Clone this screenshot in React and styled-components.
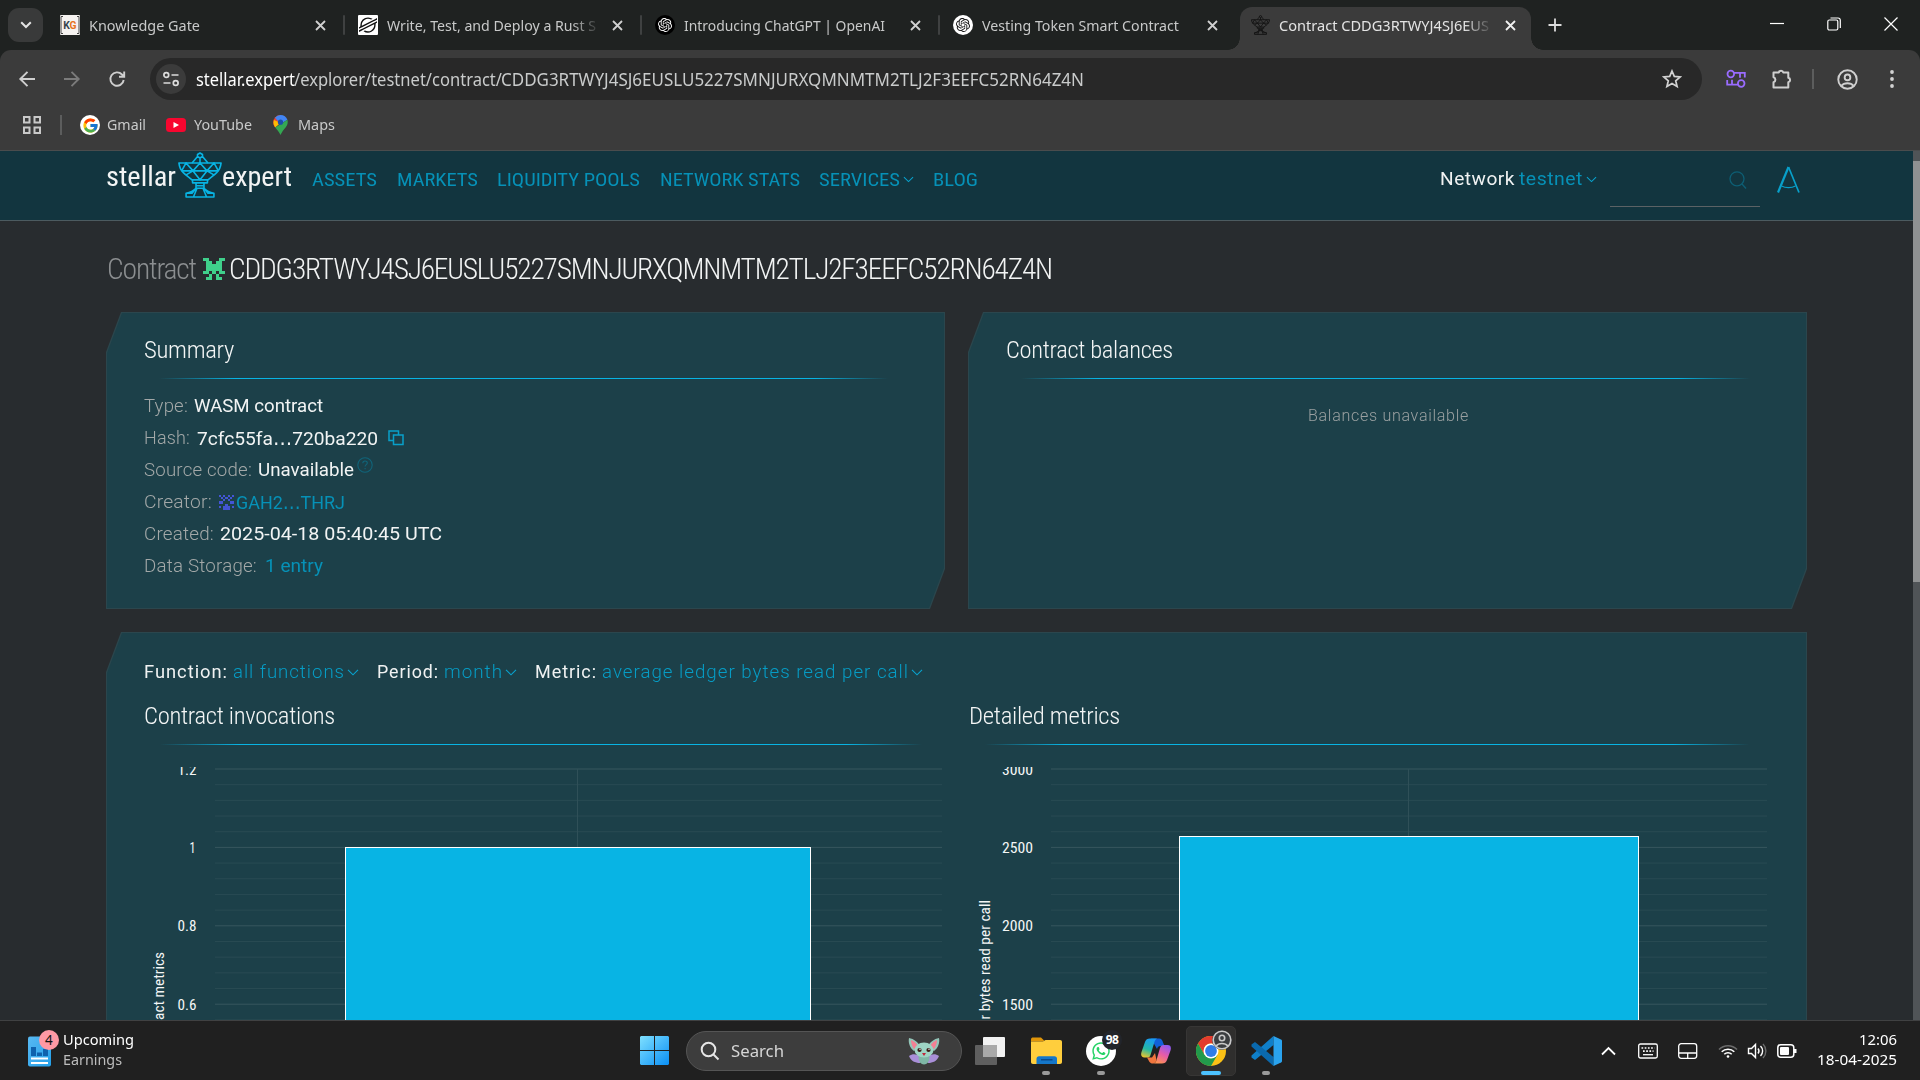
import React, { useLayoutEffect, useRef } from 'react';
import styled, { createGlobalStyle, css } from 'styled-components';
import { FcGoogle } from 'react-icons/fc';
import { FaWhatsapp } from 'react-icons/fa';
import { SiOpenai, SiStellar } from 'react-icons/si';

const ui = `'Segoe UI', 'Noto Sans', 'Open Sans', sans-serif`;
const cond = `'Roboto Condensed', Roboto, sans-serif`;
const body = `Roboto, sans-serif`;

const Global = createGlobalStyle`
  * { box-sizing: border-box; }
  html, body { margin: 0; padding: 0; background: #1f2221; overflow: hidden; }
  svg { display: block; flex: none; }
`;

/* Text that is condensed or stretched horizontally to a given width. */
const FitOuter = styled.span`
  display: block;
  flex: none;
  width: ${p => p.$w}px;
  margin-left: ${p => p.$ml || 0}px;
  white-space: pre;
`;
const FitInner = styled.span`
  display: inline-block;
  position: relative;
  left: -1px;
  transform-origin: 0 50%;
`;
function Fit({ w, ml, className, children }) {
  const ref = useRef(null);
  useLayoutEffect(() => {
    const el = ref.current;
    el.style.transform = 'none';
    const natural = el.getBoundingClientRect().width;
    el.style.transform = `scaleX(${(w + 2) / natural})`;
  }, [w, children]);
  return (
    <FitOuter className={className} $w={w} $ml={ml}>
      <FitInner ref={ref}>{children}</FitInner>
    </FitOuter>
  );
}

const Screen = styled.div`
  width: 1920px;
  height: 1080px;
  display: flex;
  flex-direction: column;
  overflow: hidden;
  font-family: ${ui};
`;

/* ---------- browser tabs ---------- */
const TabStrip = styled.div`
  height: 50px;
  flex: none;
  display: flex;
  background: #1f2221;
`;
const TabSearch = styled.div`
  width: 35px;
  height: 34px;
  margin: 8px 3px 0 8px;
  border-radius: 11px;
  background: #393a3a;
  display: flex;
  align-items: center;
  justify-content: center;
`;
const Tab = styled.div`
  width: ${p => (p.$active ? 291 : 297.5)}px;
  height: ${p => (p.$active ? 43 : 50)}px;
  margin-top: ${p => (p.$active ? 7 : 0)}px;
  margin-left: ${p => (p.$active ? 4 : 0)}px;
  padding-left: ${p => (p.$active ? 10 : 14)}px;
  padding-bottom: ${p => (p.$active ? 7 : 0)}px;
  display: flex;
  align-items: center;
  position: relative;
  border-radius: 12px 12px 0 0;
  background: ${p => (p.$active ? '#3b3b3b' : 'transparent')};
  &::before, &::after {
    content: '';
    display: ${p => (p.$active ? 'block' : 'none')};
    position: absolute;
    bottom: 0;
    width: 12px;
    height: 12px;
  }
  &::before { left: -12px; background: radial-gradient(circle at 0 0, transparent 11.5px, #3b3b3b 12px); }
  &::after { right: -12px; background: radial-gradient(circle at 100% 0, transparent 11.5px, #3b3b3b 12px); }
`;
const Favicon = styled.div`
  width: 20px;
  height: 20px;
  flex: none;
  border-radius: ${p => (p.$round ? '50%' : '1px')};
  background: ${p => p.$bg || 'transparent'};
  color: ${p => p.$fg || '#fff'};
  display: flex;
  align-items: center;
  justify-content: center;
`;
const TabTitleBox = styled.div`
  width: 210px;
  flex: none;
  margin-left: 9px;
  margin-right: 1px;
  margin-top: -1px;
  overflow: hidden;
  ${p => p.$fade && css`mask-image: linear-gradient(90deg, #000 88%, transparent 102%);`}
`;
const TabTitle = styled(Fit)`
  font: 400 15px/24px ${ui};
  color: ${p => (p.$active ? '#e4e4e4' : '#c8c9c9')};
  padding-left: 1px;
`;
const CloseBox = styled.div`
  width: 20px;
  flex: none;
  margin-left: 10px;
  display: flex;
  justify-content: center;
`;
const TabSep = styled.div`
  width: 2px;
  height: 20px;
  margin-left: auto;
  margin-right: -1px;
  border-radius: 1px;
  background: #3f4141;
`;
const NewTab = styled.div`
  margin-left: 17px;
  width: 16px;
  display: flex;
  align-items: center;
`;
const WindowButtons = styled.div`
  margin-left: auto;
  width: 158px;
  display: flex;
  align-items: center;
  gap: 43px;
  padding-left: 8px;
  padding-bottom: 2px;
`;

/* ---------- toolbar and bookmarks ---------- */
const Chrome = styled.div`
  height: 101px;
  flex: none;
  background: #3b3b3b;
  border-bottom: 1px solid #4a4c4d;
  border-radius: 11px 11px 0 0;
`;
const Toolbar = styled.div`
  height: 58px;
  display: flex;
  align-items: center;
  padding-left: 17px;
`;
const NavIcons = styled.div`
  display: flex;
  width: 133px;
  gap: 25px;
`;
const Address = styled.div`
  width: 1552px;
  height: 42px;
  border-radius: 21px;
  background: #282828;
  display: flex;
  align-items: center;
  padding-left: 6px;
`;
const SiteInfo = styled.div`
  width: 30px;
  height: 30px;
  border-radius: 50%;
  background: #3b3b3b;
  display: flex;
  align-items: center;
  justify-content: center;
`;
const Url = styled(Fit)`
  font: 400 18px/26px ${ui};
  color: ${p => (p.$strong ? '#ffffff' : '#c9cbcb')};
`;
const StarBox = styled.div`
  margin-left: auto;
  margin-right: 20px;
`;
const Actions = styled.div`
  display: flex;
  align-items: center;
  flex: 1;
  padding-left: 24px;
`;
const VLine = styled.div`
  width: 2px;
  height: 20px;
  background: #5c5d5d;
  margin-left: ${p => p.$ml || 0}px;
  margin-right: ${p => p.$mr || 0}px;
`;
const Bookmarks = styled.div`
  height: 34px;
  display: flex;
  align-items: center;
  padding-left: 23px;
`;
const BookmarkText = styled(Fit)`
  font: 400 15px/22px ${ui};
  color: #c9caca;
  margin-right: ${p => p.$mr || 0}px;
  margin-top: -2px;
`;
const GoogleDisc = styled.div`
  width: 20px;
  height: 20px;
  border-radius: 50%;
  background: #fff;
  display: flex;
  align-items: center;
  justify-content: center;
`;

/* ---------- web page ---------- */
const Viewport = styled.div`
  flex: 1;
  min-height: 0;
  display: flex;
  background: #282c2f;
`;
const Page = styled.div`
  width: 1913px;
  overflow: hidden;
`;
const Scrollbar = styled.div`
  width: 7px;
  padding-top: 10px;
  background: #505457;
`;
const Thumb = styled.div`
  height: 421px;
  background: #8f9192;
`;
const SiteHeader = styled.header`
  height: 70px;
  background: #12353f;
  border-bottom: 1px solid #4c5b60;
  display: flex;
  align-items: flex-start;
  padding-left: 107px;
`;
const LogoWord = styled(Fit)`
  font: 400 28px/32px ${cond};
  color: #f2f4f4;
  margin-top: 10px;
`;
const Dish = styled.svg`
  margin: 1px 0 0 3px;
`;
const NavItem = styled(Fit)`
  font: 400 19px/24px ${cond};
  color: #0691b7;
  margin-top: 17px;
`;
const NavChevron = styled.svg`
  margin: 25px 0 0 4px;
`;
const NetText = styled(Fit)`
  font: 400 19px/24px ${body};
  letter-spacing: 0.5px;
  color: ${p => (p.$link ? '#0691b7' : '#f0f2f2')};
  margin-top: 16px;
`;
const SearchField = styled.div`
  width: 150px;
  height: 56px;
  margin-left: 13px;
  border-bottom: 1px solid #5b6265;
  display: flex;
  justify-content: flex-end;
  padding: 20px 13px 0 0;
`;
const LogoA = styled.svg`
  margin: 15px 0 0 17px;
`;
const Content = styled.main`
  padding: 28px 0 0 106px;
`;
const TitleRow = styled.div`
  display: flex;
  height: 40px;
  align-items: center;
  padding-left: 2px;
`;
const TitleText = styled(Fit)`
  font: 300 30px/38px ${cond};
  letter-spacing: -1.2px;
  color: ${p => (p.$dim ? '#8b8e90' : '#f2f4f4')};
`;
const Row = styled.div`
  display: flex;
  gap: 23px;
  margin-top: 23px;
`;
const cut = css`
  clip-path: polygon(15px 0, 100% 0, 100% calc(100% - 40px), calc(100% - 15px) 100%, 0 100%, 0 40px);
`;
const CardEdge = styled.section`
  width: ${p => p.$w}px;
  height: ${p => p.$h}px;
  flex: none;
  padding: 1px;
  background: #2b464d;
  margin-top: ${p => p.$mt || 0}px;
  ${cut}
`;
const CardFace = styled.div`
  height: 100%;
  background: #1c4049;
  padding: ${p => p.$pad || '20px 37px 0'};
  ${cut}
`;
const Heading = styled(Fit)`
  font: 300 24px/34px ${cond};
  letter-spacing: -0.3px;
  color: #f4f6f6;
`;
const Rule = styled.div`
  height: 1px;
  margin: ${p => p.$m};
  background: linear-gradient(90deg, transparent 2%, #08b4e4 12%, #08b4e4 88%, transparent 97.5%);
`;
const Field = styled.div`
  height: 32px;
  display: flex;
  align-items: center;
`;
const Label = styled(Fit)`
  font: 300 19px/32px ${body};
  letter-spacing: 0.2px;
  color: #a3a8a8;
`;
const Value = styled(Fit)`
  font: 400 19px/32px ${body};
  color: ${p => (p.$link ? '#0691b7' : '#f2f4f4')};
`;
const Dots = styled.span`
  font-family: 'DejaVu Sans', sans-serif;
`;
const Inline = styled.div`
  margin-left: ${p => p.$ml || 0}px;
  margin-top: ${p => p.$mt || 0}px;
`;
const EmptyNote = styled.div`
  display: flex;
  justify-content: center;
  padding-top: 25px;
`;
const EmptyText = styled(Fit)`
  font: 300 16.5px/24px ${body};
  letter-spacing: 0.7px;
  color: #9aa0a1;
`;
const Filters = styled.div`
  display: flex;
  align-items: center;
  height: 32px;
`;
const FilterText = styled(Fit)`
  font: ${p => (p.$link ? 300 : 400)} 19px/32px ${body};
  letter-spacing: 1px;
  color: ${p => (p.$link ? '#069cc5' : '#f0f2f2')};
`;
const Charts = styled.div`
  display: flex;
  margin-top: 11px;
`;
const ChartCol = styled.div`
  width: ${p => p.$w}px;
  flex: none;
`;

/* ---------- taskbar ---------- */
const Taskbar = styled.footer`
  height: 60px;
  flex: none;
  display: flex;
  align-items: center;
  background: #202020;
  border-top: 1px solid #404142;
`;
const Widget = styled.div`
  display: flex;
  align-items: center;
  width: 640px;
  padding-left: 28px;
`;
const WidgetLines = styled.div`
  margin-left: 4px;
  margin-top: -4px;
`;
const WidgetText = styled(Fit)`
  font: 400 15px/20px ${ui};
  color: ${p => (p.$dim ? '#bdbdbd' : '#ffffff')};
`;
const SearchPill = styled.div`
  width: 276px;
  height: 40px;
  margin-left: 17px;
  border: 1px solid #555;
  border-radius: 20px;
  background: #3d3d3d;
  display: flex;
  align-items: center;
  padding: 0 20px 0 13px;
`;
const SearchText = styled(Fit)`
  font: 400 17px/24px ${ui};
  color: #d6d6d6;
  margin-right: auto;
`;
const TaskApp = styled.div`
  width: 50px;
  height: 50px;
  margin-left: ${p => p.$ml || 0}px;
  border-radius: 5px;
  border: 1px solid ${p => (p.$active ? '#373635' : 'transparent')};
  background: ${p => (p.$active ? '#2f2e2d' : 'transparent')};
  display: flex;
  align-items: center;
  justify-content: center;
  position: relative;
  &::after {
    content: '';
    display: ${p => (p.$run || p.$active ? 'block' : 'none')};
    position: absolute;
    bottom: 0;
    left: calc(50% - ${p => (p.$active ? 10 : 4)}px);
    width: ${p => (p.$active ? 20 : 8)}px;
    height: 4px;
    border-radius: 2px;
    background: ${p => (p.$active ? '#4cc2ff' : '#9a9a9a')};
  }
`;
const AppBadge = styled.div`
  position: absolute;
  top: 3px;
  right: 3px;
  width: 20px;
  height: 20px;
  border-radius: 50%;
  background: ${p => p.$bg};
  color: #fff;
  font: 700 12px/19px ${ui};
  text-align: center;
  letter-spacing: -0.5px;
`;
const WhatsDisc = styled.div`
  width: 30px;
  height: 30px;
  border-radius: 50%;
  background: #fff;
  color: #25d366;
  display: flex;
  align-items: center;
  justify-content: center;
`;
const Tray = styled.div`
  margin-left: auto;
  display: flex;
  align-items: center;
  padding-right: 24px;
`;
const Clock = styled.div`
  margin-left: 20px;
  margin-top: -4px;
  display: flex;
  flex-direction: column;
  align-items: flex-end;
`;
const ClockText = styled(Fit)`
  font: 400 15px/20px ${ui};
  color: #fff;
`;

/* ---------- small drawings ---------- */
const X = ({ c = '#d5d5d5' }) => (
  <svg width="11" height="11" viewBox="0 0 11 11" stroke={c} strokeWidth="1.8"><path d="M1 1l9 9M10 1l-9 9" /></svg>
);
const Chevron = ({ as: C = 'svg', c = '#08a3cf', w = 12 }) => (
  <C width={w} height="7" viewBox="0 0 12 7" fill="none" stroke={c} strokeWidth="1.1"><path d="M1 .8l5 5 5-5" /></C>
);
function DishShape({ color, sw, size, as: C = 'svg' }) {
  return (
    <C width={size} height={size * 1.04} viewBox="0 0 44 46" fill="none" stroke={color} strokeWidth={sw} strokeLinejoin="round">
      <path d="M19.5 4.5V2.5L22 1l2.500 1.500v2L22 6zM19.500 4.500L14 11M24.500 4.500L30 11M22 6v5" />
      <path d="M.8 11h42.400c-.4 4-1.700 7-4.200 9.500-2.800 3-5.500 4.500-9 7.500H14c-3.500-3-6.200-4.500-9-7.500C2.500 18 1.200 15 .8 11z" />
      <path d="M3.500 19h37M3.500 19L8 11l7 8 7-8 7 8 7-8 4.500 8M8 23l7-4 7 9 7-9 7 4" />
      <path d="M14.500 28v3h2.500M29.500 28v3H27M17 31h10M18 31v5.500h8V31M18 34h8" />
      <path d="M18 36.500c-2.500 2.500-5.500 4-10 5v3.700h28v-3.700c-4.500-1-7.500-2.500-10-5M19 36.500l-3.500 8.500M25 36.500l3.500 8.500M22 36.500h0M8 41.500h6l4-5M36 41.500h-6l-4-5" />
    </C>
  );
}
function Pixels({ rows, color, size }) {
  const n = rows.length;
  return (
    <svg width={size} height={size} viewBox={`0 0 ${n} ${n}`} shapeRendering="crispEdges" fill={color}>
      {rows.map((r, y) => [...r].map((c, x) => (c === '#' ? <rect key={`${x}-${y}`} x={x} y={y} width="1" height="1" /> : null)))}
    </svg>
  );
}
const contractId = ['##...##', '.##.##.', '.#####.', '.#####.', '##.#.##', '..#.#..', '.##.##.'];
const creatorId = ['#.#.#.#', '.#.#.#.', '..#.#..', '##...##', '...#...', '#.###.#', '..###..'];

const Copy = () => (
  <svg width="16" height="16" viewBox="0 0 16 16" fill="none" stroke="#08a0ca" strokeWidth="1.5"><path d="M5 10.500H1V1h9.500v3.500M5.500 5H15v9.500H5.500z" /></svg>
);
const Help = () => (
  <svg width="16" height="16" viewBox="0 0 16 16" fill="none" stroke="#10647a" strokeWidth="1.1"><circle cx="8" cy="8" r="7.200" /><path d="M5.800 6.200c0-3 4.500-2.900 4.500-.2 0 1.700-2.200 1.700-2.200 3.600M8.100 11v1.300" /></svg>
);

/* ---------- charts ---------- */
function Chart({ width, plot, bar, labels, labelEnd, title, titleX, titleEnd, titleLen, labelLens }) {
  const step = 15.68;
  const lines = Array.from({ length: 17 }, (_, i) => i);
  const textStyle = { fontFamily: cond, fontSize: 15, fill: '#f4f6f6', fontWeight: 400 };
  return (
    <svg width={width} height="253" viewBox={`0 0 ${width} 253`}>
      {lines.map(i => (
        <rect key={i} x={plot[0]} width={plot[1] - plot[0]} y={1.500 + i * step} height="1" fill={i % 5 === 0 ? '#37565e' : '#294b53'} />
      ))}
      <rect x={Math.floor((plot[0] + plot[1]) / 2) - 1} y="2" width="1" height="80" fill="#2f5058" />
      <rect x={bar[0] + 0.5} y={bar[2] + 0.5} width={bar[1] - bar[0] - 1} height="300" fill="#08b4e4" stroke="#ffffff" />
      {labels.map((t, i) => (
        <text key={t} x={t === '1' ? labelEnd - 1 : labelEnd} y={7.500 + i * 78.400} textAnchor="end" textLength={labelLens[i]} lengthAdjust="spacingAndGlyphs" style={textStyle}>{t}</text>
      ))}
      <text transform={`translate(${titleX} ${titleEnd}) rotate(-90)`} textAnchor="end" textLength={titleLen} lengthAdjust="spacingAndGlyphs" style={{ ...textStyle, fontSize: 14.500 }}>{title}</text>
    </svg>
  );
}

/* ---------- taskbar drawings ---------- */
const WinLogo = () => (
  <svg width="29" height="29" viewBox="0 0 29 29">
    <defs><linearGradient id="win" x1="0" y1="0" x2="1" y2="1"><stop offset="0" stopColor="#7fe0ff" /><stop offset="1" stopColor="#0a8ff5" /></linearGradient></defs>
    <path fill="url(#win)" d="M1 0h13v14H0V1zM15 0h13l1 1v13H15zM0 15h14v14H1l-1-1zM15 15h14v13l-1 1H15z" />
  </svg>
);
const WidgetIcon = () => (
  <svg width="32" height="42" viewBox="0 0 32 42">
    <defs><linearGradient id="wd" x1="0" y1="0" x2="1" y2="1"><stop offset="0" stopColor="#59b9f2" /><stop offset="1" stopColor="#23a0ea" /></linearGradient></defs>
    <rect x="0" y="6.500" width="23" height="30" rx="2" fill="url(#wd)" />
    <path fill="#0f62ad" d="M3 17h5v9H3zM9 22.500h5V26H9zM15 19h5v7h-5z" />
    <path fill="#fff" d="M3 27.500h17v2H3zM3 32h17v2H3z" />
    <circle cx="21" cy="10" r="10" fill="#ff99a4" />
    <text x="20.800" y="15" textAnchor="middle" style={{ fontFamily: ui, fontSize: 13.500, fill: '#111' }}>4</text>
  </svg>
);
const Bat = () => (
  <svg width="34" height="28" viewBox="0 0 34 28">
    <path d="M2 19c4-3 8-2 12 1l-1 6C8 26 4 24 2 19zM32 19c-4-3-8-2-12 1l1 6c5 0 9-2 11-7z" fill="#a98fd8" />
    <path d="M2 1c5 1 9 4 11 8l-6 5C3 11 1 6 2 1zM32 1c-5 1-9 4-11 8l6 5c4-3 6-8 5-13z" fill="#93c5b8" />
    <path d="M4 3c3 1 5 3 7 6l-4 3C5 9 4 6 4 3zM30 3c-3 1-5 3-7 6l4 3c2-3 3-6 3-9z" fill="#f47f93" />
    <ellipse cx="17" cy="21" rx="5.500" ry="6.500" fill="#7fb7a6" />
    <ellipse cx="17" cy="13" rx="9.500" ry="7.500" fill="#9ed4c4" />
    <circle cx="12.500" cy="13" r="2.100" fill="#3a1c16" /><circle cx="21.500" cy="13" r="2.100" fill="#3a1c16" />
    <circle cx="13" cy="12.300" r=".7" fill="#fff" /><circle cx="22" cy="12.300" r=".7" fill="#fff" />
    <path d="M15 16h4l-2 3z" fill="#c2253a" />
  </svg>
);
const TaskView = () => (
  <svg width="30" height="28" viewBox="0 0 30 28">
    <rect x="8" y="0" width="22" height="20" rx="1" fill="#f2f2f2" />
    <rect x="0" y="8" width="22" height="20" rx="1" fill="#6b6b6b" opacity=".85" />
    <path d="M8 8h14v12H8z" fill="#a9a9a9" />
  </svg>
);
const Folder = () => (
  <svg width="31" height="28" viewBox="0 0 31 28">
    <path d="M0 2.500C0 1 1 .5 2 .5h8l4 4H0z" fill="#e0960a" />
    <path d="M0 4.500h12l2.500-1.500H29c1.300 0 2 .7 2 2V25c0 1.200-.7 2-2 2H2c-1.200 0-2-.8-2-2z" fill="#ffce3d" />
    <path d="M5.500 27v-5c0-1.700 1-2.700 2.500-2.700h15.500c1.500 0 2.500 1 2.500 2.700v5z" fill="#1577c9" />
    <path d="M10 22h11.500v1.500H10z" fill="#0a4b8c" />
  </svg>
);
const Copilot = () => (
  <svg width="30" height="26" viewBox="0 0 30 26">
    <defs>
      <linearGradient id="c1" x1="0.500" y1="0" x2="0.200" y2="1"><stop offset="0" stopColor="#1a9cf0" /><stop offset=".55" stopColor="#24b9a5" /><stop offset="1" stopColor="#f2c52a" /></linearGradient>
      <linearGradient id="c2" x1="0.800" y1="0" x2="0.300" y2="1"><stop offset="0" stopColor="#8c5af5" /><stop offset=".5" stopColor="#e55baa" /><stop offset="1" stopColor="#ff9350" /></linearGradient>
    </defs>
    <path fill="#1160d8" d="M10 .5h8c2.500 0 3.500 2 4 4L23.500 8h-4c-2 0-3 1-3.500 3z" />
    <path fill="url(#c1)" d="M9 .5h7c-2 1-2.500 3-3 5L9.500 17c-.6 2-1.500 2.500-3 2.500H3.500c-3 0-4-2-3-5.500L4 4C4.800 1.500 6.500.5 9 .5z" />
    <path fill="url(#c2)" d="M21 25.500h-9c2 0 3-1.500 3.500-3.500L19 10c.7-2 1.700-3 3.500-3h4c3 0 4 2 3 5.500L26 22c-.8 2.500-2.500 3.500-5 3.500z" />
    <path fill="#f1763e" d="M6 19.500h5l3-4.500 1.500 7c-.5 2.200-1.700 3.500-3.500 3.500-3 0-3.500-1.500-6-6z" />
  </svg>
);
const ChromeLogo = () => (
  <svg width="30" height="30" viewBox="0 0 30 30">
    <circle cx="15" cy="15" r="15" fill="#fbc116" />
    <path d="M2 7.500A15 15 0 0 1 28 7.500H15a7.500 7.500 0 0 0-6.700 4.200L8.500 18.800z" fill="#e33b2e" />
    <path d="M8.500 18.800L2 7.500 A15 15 0 0 0 15 30l6.500-11.300z" fill="#229a4b" />
    <circle cx="15" cy="15" r="7.500" fill="#fff" /><circle cx="15" cy="15" r="5.900" fill="#2f7de8" />
  </svg>
);
const VsCode = () => (
  <svg width="31" height="30" viewBox="0 0 31 30">
    <path d="M22.500 0v9L4 24l-3.500-2.500v-2z" fill="#0f7fc9" />
    <path d="M4 6L.5 8.500v2L22.500 30v-9z" fill="#0a69ae" />
    <path d="M22.500 0L30 3.400c.6.300 1 .8 1 1.500v20.200c0 .7-.4 1.200-1 1.500L22.500 30z" fill="#2aa3ee" />
  </svg>
);
const Person = ({ size, c, sw = 2 }) => (
  <svg width={size} height={size} viewBox="0 0 20 20" fill="none" stroke={c} strokeWidth={sw}>
    <circle cx="10" cy="10" r="8.800" /><circle cx="10" cy="8" r="2.700" /><path d="M4.200 16c2.500-3.300 9-3.300 11.600 0" />
  </svg>
);
const Tick = styled.div`
  margin-left: ${p => p.$ml}px;
`;

function BrowserTab({ icon, title, width, fade, active, last }) {
  return (
    <Tab $active={active}>
      {icon}
      <TabTitleBox $fade={fade}><TabTitle w={width} $active={active}>{title}</TabTitle></TabTitleBox>
      <CloseBox><X c={active ? '#f0f0f0' : '#d0d0d0'} /></CloseBox>
      {!active && !last && <TabSep />}
    </Tab>
  );
}

export default function App() {
  return (
    <Screen>
      <Global />
      <TabStrip>
        <TabSearch>
          <svg width="12" height="8" viewBox="0 0 12 8" fill="none" stroke="#e3e3e3" strokeWidth="2"><path d="M1.200 1.200L6 6l4.800-4.800" /></svg>
        </TabSearch>
        <BrowserTab title="Knowledge Gate" width={109} icon={
          <Favicon $bg="#f6f3f1">
            <svg width="20" height="20" viewBox="0 0 20 20">
              <path d="M3 1.500H1v17h2M17 1.500h2v17h-2" fill="none" stroke="#444" strokeWidth="1" />
              <text x="3.300" y="14.300" textLength="6.600" lengthAdjust="spacingAndGlyphs" style={{ fontFamily: body, fontWeight: 700, fontSize: 11.500, fill: '#3a4650' }}>K</text>
              <text x="9.600" y="14.300" textLength="7" lengthAdjust="spacingAndGlyphs" style={{ fontFamily: body, fontWeight: 700, fontSize: 11.500, fill: '#e8731f' }}>G</text>
            </svg>
          </Favicon>} />
        <BrowserTab title="Write, Test, and Deploy a Rust S" width={207} fade icon={<Favicon $bg="#fff" $fg="#111"><SiStellar size={18} /></Favicon>} />
        <BrowserTab title="Introducing ChatGPT | OpenAI" width={199} icon={<Favicon $round $bg="#000"><SiOpenai size={14} /></Favicon>} />
        <BrowserTab last title="Vesting Token Smart Contract" width={195} icon={<Favicon $round $bg="#fff" $fg="#111"><SiOpenai size={14} /></Favicon>} />
        <BrowserTab active title="Contract CDDG3RTWYJ4SJ6EUS" width={208} fade icon={<Favicon><DishShape color="#111" sw="2" size={19} /></Favicon>} />
        <NewTab>
          <svg width="14" height="14" viewBox="0 0 14 14" stroke="#dcdcdc" strokeWidth="1.8"><path d="M7 .5v13M.5 7h13" /></svg>
        </NewTab>
        <WindowButtons>
          <svg width="14" height="14" viewBox="0 0 14 14" stroke="#fff" strokeWidth="1.200"><path d="M0 6.500h14" /></svg>
          <svg width="14" height="14" viewBox="0 0 14 14" fill="none" stroke="#fff" strokeWidth="1.200"><rect x=".8" y="3" width="10" height="10" rx="1.500" /><path d="M3.500 1h7.500a2.300 2.300 0 0 1 2.300 2.300V11" /></svg>
          <svg width="14" height="14" viewBox="0 0 14 14" stroke="#fff" strokeWidth="1.200"><path d="M.5.5l13 13M13.500.5l-13 13" /></svg>
        </WindowButtons>
      </TabStrip>

      <Chrome>
        <Toolbar>
          <NavIcons>
            <svg width="20" height="20" viewBox="0 0 20 20" fill="none" stroke="#cfcfcf" strokeWidth="1.900"><path d="M18 10H3.500M10.500 2.800L3.300 10l7.200 7.200" /></svg>
            <svg width="20" height="20" viewBox="0 0 20 20" fill="none" stroke="#7b7b7b" strokeWidth="1.900"><path d="M2 10h14.500M9.500 2.800l7.200 7.200-7.200 7.200" /></svg>
            <svg width="20" height="20" viewBox="0 0 20 20" fill="none" stroke="#cfcfcf" strokeWidth="1.900"><path d="M16.700 11A6.700 6.700 0 1 1 15 5.500l2 2M17.200 2.500v5.200H12" /></svg>
          </NavIcons>
          <Address>
            <SiteInfo>
              <svg width="18" height="16" viewBox="0 0 18 16" fill="none" stroke="#dcdcdc" strokeWidth="1.700"><circle cx="4.300" cy="4" r="2.400" /><path d="M9.500 4h7M1.500 12h7" /><circle cx="13.700" cy="12" r="2.400" /></svg>
            </SiteInfo>
            <Url w={97} ml={11} $strong>stellar.expert</Url>
            <Url w={206} ml={1}>/explorer/testnet/contract/</Url>
            <Url w={581} ml={1}>CDDG3RTWYJ4SJ6EUSLU5227SMNJURXQMNMTM2TLJ2F3EEFC52RN64Z4N</Url>
            <StarBox>
              <svg width="20" height="20" viewBox="0 0 20 20" fill="none" stroke="#d2d2d2" strokeWidth="1.700"><path d="M10 2l2.300 5.400 5.900.5-4.500 3.900 1.400 5.700L10 14.500l-5.100 3 1.400-5.700-4.500-3.900 5.900-.5z" /></svg>
            </StarBox>
          </Address>
          <Actions>
            <svg width="20" height="20" viewBox="0 0 20 20" fill="none" stroke="#9a6cff" strokeWidth="1.800"><circle cx="4.800" cy="5" r="3.300" /><path d="M8 3.800h10.800v4.700M14 3.800v5" /><circle cx="15.200" cy="14.500" r="3.300" /><path d="M12 15.700H1.200V11M6 15.700v-5" /></svg>
            <Tick $ml={25}><svg width="22" height="22" viewBox="0 0 22 22" fill="none" stroke="#cfcfcf" strokeWidth="2"><path d="M2.500 4.500h5.300a2.300 2.300 0 0 1 4.500 0h5v5.300a2.300 2.300 0 0 1 0 4.500v5.200H2.500v-5.200a2.600 2.600 0 0 0 0-5z" strokeLinejoin="round" /></svg></Tick>
            <VLine $ml={19} />
            <Tick $ml={23}><Person size={21} c="#cfcfcf" sw={1.8} /></Tick>
            <Tick $ml={31}><svg width="6" height="20" viewBox="0 0 6 20" fill="#d2d2d2"><circle cx="3" cy="3" r="1.900" /><circle cx="3" cy="10" r="1.900" /><circle cx="3" cy="17" r="1.900" /></svg></Tick>
          </Actions>
        </Toolbar>
        <Bookmarks>
          <svg width="18" height="18" viewBox="0 0 18 18" fill="none" stroke="#c9c9c9" strokeWidth="2"><path d="M1 1h5.500v5.500H1zM11.500 1H17v5.500h-5.500zM1 11.500h5.500V17H1zM11.500 11.500H17V17h-5.500z" /></svg>
          <VLine $ml={19} $mr={18} />
          <GoogleDisc><FcGoogle size={17} /></GoogleDisc>
          <BookmarkText w={37} ml={8} $mr={21}>Gmail</BookmarkText>
          <svg width="20" height="14" viewBox="0 0 20 14"><rect width="20" height="14" rx="3.500" fill="#f8062f" /><path d="M7.500 4l5.500 3-5.500 3z" fill="#fff" /></svg>
          <BookmarkText w={56} ml={9} $mr={22}>YouTube</BookmarkText>
          <svg width="15" height="20" viewBox="0 0 15 20">
            <path d="M7.500 0A7.300 7.300 0 0 0 .2 7.300c0 2 .7 3.500 1.800 5L7.500 7z" fill="#ea4335" />
            <path d="M7.500 0a7.300 7.300 0 0 1 6.900 4.800L7.500 9 2 2.700A7.300 7.300 0 0 1 7.500 0z" fill="#4285f4" />
            <path d="M1 5L7.500 8 2.200 12.500A8 8 0 0 1 1 5z" fill="#fbbc04" />
            <path d="M14.400 4.800c.9 3.300-.2 5.700-1.800 7.700C10.500 15 8.800 17 7.500 20 6.400 17 4 14.800 2.200 12.500z" fill="#34a853" />
            <circle cx="7.500" cy="7.200" r="2.600" fill="#1d4fa8" />
          </svg>
          <BookmarkText w={35} ml={11}>Maps</BookmarkText>
        </Bookmarks>
      </Chrome>

      <Viewport>
        <Page>
          <SiteHeader>
            <LogoWord w={68}>stellar</LogoWord>
            <DishShape as={Dish} color="#08b4e4" sw="1.600" size={44} />
            <LogoWord w={68} ml={1}>expert</LogoWord>
            <NavItem w={63} ml={22}>ASSETS</NavItem>
            <NavItem w={79} ml={22}>MARKETS</NavItem>
            <NavItem w={141} ml={21}>LIQUIDITY POOLS</NavItem>
            <NavItem w={138} ml={22}>NETWORK STATS</NavItem>
            <NavItem w={79} ml={21}>SERVICES</NavItem>
            <Chevron as={NavChevron} w={11} />
            <NavItem w={43} ml={20}>BLOG</NavItem>
            <NetText w={73} ml={464}>Network</NetText>
            <NetText w={62} ml={6} $link>testnet</NetText>
            <Chevron as={NavChevron} w={11} />
            <SearchField>
              <svg width="18" height="18" viewBox="0 0 18 18" fill="none" stroke="#0d5e74" strokeWidth="1.300"><circle cx="8" cy="7.800" r="7" /><path d="M13 13l4 4.500" /></svg>
            </SearchField>
            <LogoA width="23" height="27" viewBox="0 0 23 27" fill="none" stroke="#08a0ca"><path d="M1 26.500L11.500 1" strokeWidth="2.200" /><path d="M11.500 1L22 26.500" strokeWidth="1.700" /><path d="M4.500 20c4 2.200 10 2.200 14 0" strokeWidth="1.100" /></LogoA>
          </SiteHeader>
          <Content>
            <TitleRow>
              <TitleText w={87} $dim>Contract</TitleText>
              <Inline $ml={8}><Pixels rows={contractId} color="#3fd08b" size={22} /></Inline>
              <TitleText w={821} ml={5}>CDDG3RTWYJ4SJ6EUSLU5227SMNJURXQMNMTM2TLJ2F3EEFC52RN64Z4N</TitleText>
            </TitleRow>
            <Row>
              <CardEdge $w={839} $h={297}>
                <CardFace>
                  <Heading w={88} ml={1}>Summary</Heading>
                  <Rule $m="11px 0 11px" />
                  <Field><Label w={42} ml={1}>Type:</Label><Value w={127} ml={8}>WASM contract</Value></Field>
                  <Field><Label w={44} ml={1}>Hash:</Label><Value w={179} ml={9}>7cfc55fa<Dots>…</Dots>720ba220</Value><Inline $ml={11}><Copy /></Inline></Field>
                  <Field><Label w={106} ml={1}>Source code:</Label><Value w={94} ml={8}>Unavailable</Value><Inline $ml={4} $mt={-11}><Help /></Inline></Field>
                  <Field><Label w={66} ml={1}>Creator:</Label><Inline $ml={8}><Pixels rows={creatorId} color="#4355d6" size={15} /></Inline><Value w={107} ml={3} $link>GAH2<Dots>…</Dots>THRJ</Value></Field>
                  <Field><Label w={68} ml={1}>Created:</Label><Value w={220} ml={8}>2025-04-18 05:40:45 UTC</Value></Field>
                  <Field><Label w={111} ml={1}>Data Storage:</Label><Value w={56} ml={10} $link>1 entry</Value></Field>
                </CardFace>
              </CardEdge>
              <CardEdge $w={839} $h={297}>
                <CardFace>
                  <Heading w={165} ml={1}>Contract balances</Heading>
                  <Rule $m="11px 0 0" />
                  <EmptyNote><EmptyText w={159} ml={1}>Balances unavailable</EmptyText></EmptyNote>
                </CardFace>
              </CardEdge>
            </Row>
            <CardEdge $w={1701} $h={500} $mt={23}>
              <CardFace $pad="23px 37px 0">
                <Filters>
                  <FilterText w={82} ml={1}>Function:</FilterText><FilterText w={110} ml={7} $link>all functions</FilterText><Inline $ml={3}><Chevron /></Inline>
                  <FilterText w={60} ml={19}>Period:</FilterText><FilterText w={57} ml={7} $link>month</FilterText><Inline $ml={3}><Chevron /></Inline>
                  <FilterText w={60} ml={19}>Metric:</FilterText><FilterText w={305} ml={7} $link>average ledger bytes read per call</FilterText><Inline $ml={3}><Chevron /></Inline>
                </Filters>
                <Charts>
                  <ChartCol $w={825}>
                    <Heading w={189} ml={1}>Contract invocations</Heading>
                    <Rule $m="11px 27px 22px 0" />
                    <Chart width={798} plot={[71, 798]} bar={[201, 667, 80]} labels={['1.2', '1', '0.8', '0.6']} labelLens={[19, 6, 19, 19]} labelEnd={52.5}
                      title="contract metrics" titleX={20} titleEnd={185} titleLen={99} />
                  </ChartCol>
                  <ChartCol $w={800}>
                    <Heading w={149} ml={1}>Detailed metrics</Heading>
                    <Rule $m="11px 0 22px 0" />
                    <Chart width={799} plot={[82, 798]} bar={[210, 670, 69]} labels={['3000', '2500', '2000', '1500']} labelLens={[31, 31, 31, 31]} labelEnd={64}
                      title="average ledger bytes read per call" titleX={21} titleEnd={133} titleLen={204} />
                  </ChartCol>
                </Charts>
              </CardFace>
            </CardEdge>
          </Content>
        </Page>
        <Scrollbar><Thumb /></Scrollbar>
      </Viewport>

      <Taskbar>
        <Widget>
          <WidgetIcon />
          <WidgetLines>
            <WidgetText w={69}>Upcoming</WidgetText>
            <WidgetText w={57} $dim>Earnings</WidgetText>
          </WidgetLines>
        </Widget>
        <WinLogo />
        <SearchPill>
          <svg width="20" height="20" viewBox="0 0 20 20" fill="none" stroke="#e6e6e6" strokeWidth="2"><circle cx="8.500" cy="8.500" r="6.800" /><path d="M13.500 13.500l5 5" /></svg>
          <SearchText w={51} ml={12}>Search</SearchText>
          <Bat />
        </SearchPill>
        <TaskApp $ml={3}><TaskView /></TaskApp>
        <TaskApp $ml={6} $run><Folder /></TaskApp>
        <TaskApp $ml={5} $run><WhatsDisc><FaWhatsapp size={20} /></WhatsDisc><AppBadge $bg="#22252b">98</AppBadge></TaskApp>
        <TaskApp $ml={5}><Copilot /></TaskApp>
        <TaskApp $ml={5} $active><ChromeLogo /><AppBadge $bg="#3a3d40"><Person size={20} c="#c9c9c9" sw={1.6} /></AppBadge></TaskApp>
        <TaskApp $ml={5} $run><VsCode /></TaskApp>
        <Tray>
          <svg width="15" height="10" viewBox="0 0 15 10" fill="none" stroke="#fff" strokeWidth="1.800"><path d="M1 8.500l6.500-6.500L14 8.500" /></svg>
          <Tick $ml={22}><svg width="20" height="16" viewBox="0 0 20 16" fill="none" stroke="#fff" strokeWidth="1.300"><rect x=".7" y="1" width="18.600" height="14" rx="1.800" /><path d="M3.500 5h13M5 8.200h10.500" strokeDasharray="1.700 1.500" strokeWidth="1.700" /><path d="M5 11.700h10" /></svg></Tick>
          <Tick $ml={20}><svg width="20" height="16" viewBox="0 0 20 16" fill="none" stroke="#fff" strokeWidth="1.300"><rect x=".7" y=".7" width="18" height="14.600" rx="2.500" /><path d="M.7 10h18M9.700 10v5" /></svg></Tick>
          <Tick $ml={20}><svg width="20" height="16" viewBox="0 0 20 16" fill="none" stroke="#fff" strokeWidth="1.600"><path d="M1 6.500a12.700 12.700 0 0 1 18 0" stroke="#6b6b6b" /><path d="M3.700 8.800a9 9 0 0 1 12.600 0M6.300 11.300a5.300 5.300 0 0 1 7.400 0" /><circle cx="10" cy="13.500" r="1.300" fill="#fff" stroke="none" /></svg></Tick>
          <Tick $ml={9}><svg width="21" height="18" viewBox="0 0 21 18" fill="none" stroke="#fff" strokeWidth="1.400"><path d="M1.500 6.500h3l4-4v13l-4-4h-3zM11 6.500a4 4 0 0 1 0 5M13.500 4a7 7 0 0 1 0 10" /><path d="M16 2a10 10 0 0 1 0 14" stroke="#6b6b6b" /></svg></Tick>
          <Tick $ml={9}><svg width="21" height="14" viewBox="0 0 21 14" fill="none" stroke="#fff" strokeWidth="1.500"><rect x=".8" y=".8" width="16" height="12.400" rx="3" /><rect x="3" y="3" width="9" height="8" rx="1" fill="#fff" stroke="none" /><path d="M18 5v4" strokeWidth="3" /></svg></Tick>
          <Clock>
            <ClockText w={36}>12:06</ClockText>
            <ClockText w={78}>18-04-2025</ClockText>
          </Clock>
        </Tray>
      </Taskbar>
    </Screen>
  );
}
